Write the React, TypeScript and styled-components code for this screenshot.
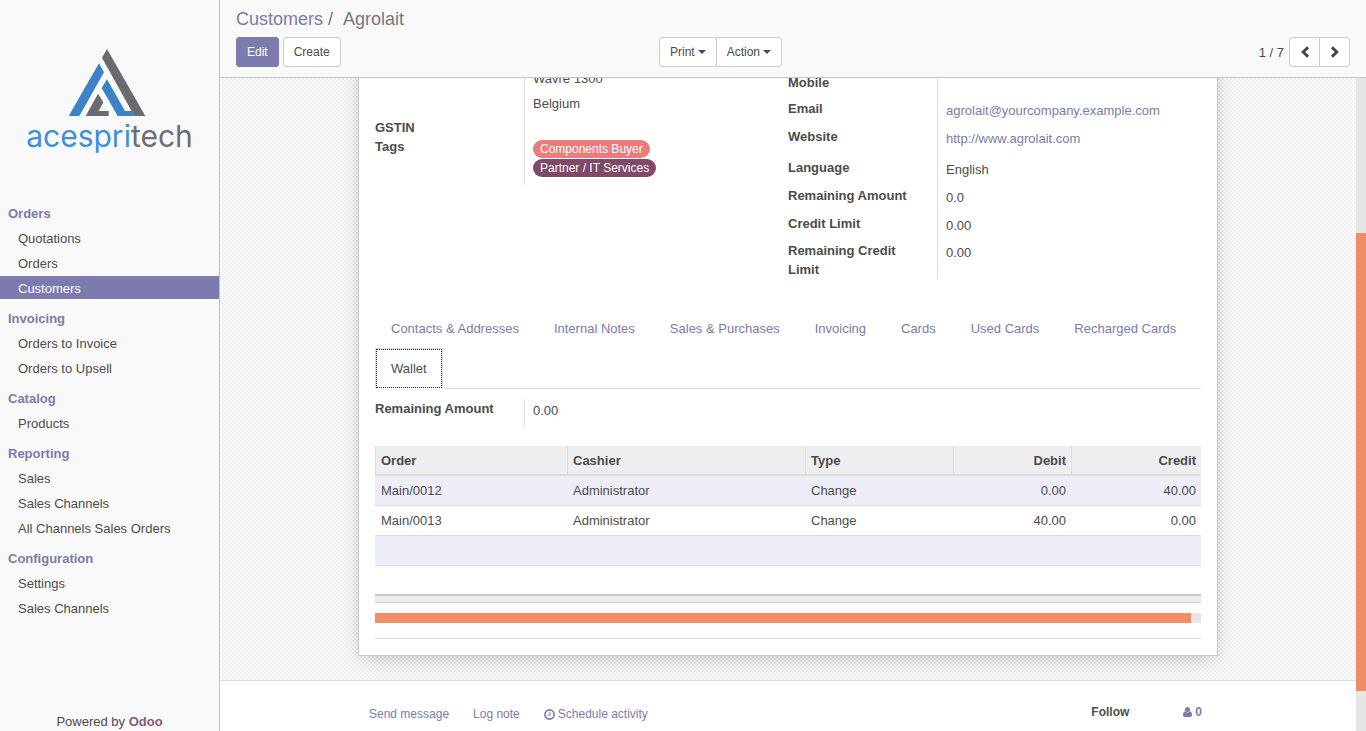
import React from "react";
import styled, { createGlobalStyle } from "styled-components";

const purple = "#7c7bad";
const orange = "#f08d66";

const GlobalStyle = createGlobalStyle`
  *, *::before, *::after { box-sizing: border-box; }
  body {
    margin: 0;
    background: #fff;
    color: #4c4c4c;
    font-family: "Liberation Sans", Arial, sans-serif;
    font-size: 13px;
    line-height: 19px;
  }
  a { color: ${purple}; text-decoration: none; }
  button { font-family: inherit; cursor: pointer; }
`;

const Shell = styled.div`
  display: flex;
  height: 100vh;
  overflow: hidden;
`;

const Sidebar = styled.aside`
  display: flex;
  flex-direction: column;
  flex: 0 0 220px;
  background: #f9f9f9;
  border-right: 1px solid #c0c0c0;
`;

const Brand = styled.a`
  display: flex;
  flex-direction: column;
  align-items: center;
  height: 201px;
  padding-top: 48px;
  svg { display: block; margin-right: 5px; }
`;

const Wordmark = styled.span<{ $grey?: boolean }>`
  color: ${(p) => (p.$grey ? "#6d6e73" : "#3f8fdc")};
`;

const WordmarkLine = styled.span`
  font-family: Inter, "Open Sans", sans-serif;
  font-size: 30px;
  font-weight: 400;
  line-height: 38px;
`;

const Menu = styled.nav`
  flex: 1 1 auto;
  min-height: 0;
  overflow: hidden;
`;

const MenuHeading = styled.h2`
  margin: 0 0 2px;
  padding: 3px 8px 1px;
  font-size: 13px;
  line-height: 19px;
  color: ${purple};
`;

const MenuList = styled.ul`
  list-style: none;
  margin: 0 0 7px;
  padding: 0;
  display: flex;
  flex-direction: column;
  gap: 2px;
`;

const MenuLink = styled.a<{ $active?: boolean }>`
  display: block;
  padding: 3px 18px 1px;
  color: ${(p) => (p.$active ? "#fff" : "#4c4c4c")};
  background: ${(p) => (p.$active ? purple : "transparent")};
`;

const SidebarFooter = styled.footer`
  text-align: center;
  b { color: #875a7b; }
`;

const Main = styled.main`
  display: flex;
  flex-direction: column;
  flex: 1 1 auto;
  min-width: 0;
`;

const ControlPanel = styled.header`
  flex: none;
  padding: 9px 16px 10px;
  background: #f9f9f9;
  border-bottom: 1px solid #c4c4c4;
`;

const Breadcrumb = styled.h1`
  display: flex;
  gap: 5px;
  margin: 0 0 8px;
  font-size: 18px;
  font-weight: 400;
  line-height: 20px;
  color: #777;
`;

const Crumb = styled.span`
  padding-left: 5px;
`;

const Toolbar = styled.div`
  display: grid;
  grid-template-columns: 423px 1fr auto;
  align-items: center;
`;

const ButtonRow = styled.div`
  display: flex;
  gap: 4px;
`;

const ButtonGroup = styled.div`
  display: flex;
  button { border-radius: 0; }
  button + button { margin-left: -1px; }
  button:first-child { border-radius: 3px 0 0 3px; }
  button:last-child { border-radius: 0 3px 3px 0; }
`;

const Button = styled.button<{ $primary?: boolean }>`
  display: inline-flex;
  align-items: center;
  gap: 3px;
  height: 30px;
  padding: 0 10px;
  font-size: 12px;
  line-height: 18px;
  border-radius: 3px;
  border: 1px solid ${(p) => (p.$primary ? purple : "#ccc")};
  background: ${(p) => (p.$primary ? purple : "#fff")};
  color: ${(p) => (p.$primary ? "#fff" : "#4c4c4c")};
`;

const PagerButton = styled(Button)`
  justify-content: center;
  width: 31px;
  padding: 0;
`;

const Pager = styled.div`
  display: flex;
  align-items: center;
  gap: 5px;
`;

const Caret = styled.span`
  border: 4px solid transparent;
  border-top-color: currentColor;
  border-bottom-width: 0;
`;

const Viewport = styled.div`
  display: flex;
  flex: 1 1 auto;
  min-height: 0;
`;

const Scroller = styled.div`
  flex: 1 1 auto;
  min-width: 0;
  overflow: hidden;
`;

const VerticalTrack = styled.div`
  display: flex;
  flex-direction: column;
  flex: 0 0 10px;
  background: #e6e6e6;
  &::before { content: ""; flex: 155; }
  &::after { content: ""; flex: 40; }
`;

const VerticalThumb = styled.div`
  flex: 458;
  background: ${orange};
`;

const FormBackground = styled.div`
  overflow: hidden;
  padding: 0 16px 24px;
  background: repeating-conic-gradient(#eee 0% 25%, #fff 0% 50%) 0 0 / 4px 4px;
`;

const Sheet = styled.section`
  max-width: 860px;
  margin: -29px auto 0;
  padding: 16px;
  background: #fff;
  border: 1px solid #c8c8d3;
  box-shadow: 0 5px 20px -4px rgba(0, 0, 0, 0.26);
`;

const Groups = styled.div`
  display: grid;
  grid-template-columns: 1fr 1fr;
  align-items: start;
  margin-bottom: 29px;
`;

const Group = styled.dl<{ $offset?: boolean }>`
  margin: 0;
  padding-top: ${(p) => (p.$offset ? 7 : 0)}px;
`;

const Field = styled.div<{ $height: number }>`
  display: grid;
  grid-template-columns: 149px 1fr;
  min-height: ${(p) => p.$height}px;
`;

const Label = styled.dt`
  padding-right: 10px;
  font-weight: 700;
`;

const Value = styled.dd<{ $flush?: boolean }>`
  margin: 0;
  padding: ${(p) => (p.$flush ? 0 : 2)}px 0 0 8px;
  border-left: 1px solid #ddd;
`;

const AddressLine = styled.div`
  line-height: 25px;
`;

const TagList = styled.div`
  display: flex;
  flex-direction: column;
  align-items: flex-start;
  gap: 1px;
  padding-top: 1px;
`;

const Tag = styled.span<{ $color: string }>`
  padding: 0 7px;
  border-radius: 9px;
  font-size: 12px;
  line-height: 18px;
  color: #fff;
  background: ${(p) => p.$color};
`;

const Tabs = styled.div`
  display: flex;
  flex-wrap: wrap;
  column-gap: 3px;
  margin-bottom: 10px;
  border-bottom: 1px solid #ddd;
`;

const Tab = styled.button<{ $active?: boolean }>`
  margin: 0 0 -1px;
  padding: 10px 15px;
  font-size: 13px;
  line-height: 19px;
  color: ${(p) => (p.$active ? "#4c4c4c" : purple)};
  background: ${(p) => (p.$active ? "#fff" : "transparent")};
  border: 1px solid ${(p) => (p.$active ? "#ddd" : "transparent")};
  border-bottom-color: ${(p) => (p.$active ? "#fff" : "transparent")};
  outline: ${(p) => (p.$active ? "1px dotted #222" : "none")};
  outline-offset: -2px;
`;

const Table = styled.table`
  width: 100%;
  margin-top: 20px;
  table-layout: fixed;
  border-collapse: separate;
  border-spacing: 0;
`;

const HeadCell = styled.th<{ $width?: number; $right?: boolean }>`
  width: ${(p) => (p.$width ? `${p.$width}px` : "auto")};
  height: 30px;
  padding: 0 5px;
  text-align: ${(p) => (p.$right ? "right" : "left")};
  background: #eee;
  border-left: 1px solid #ddd;
  border-bottom: 2px solid #ddd;
`;

const Row = styled.tr`
  &:nth-child(odd) td { background-color: #eeeef8; }
`;

const Cell = styled.td<{ $right?: boolean }>`
  height: 30px;
  padding: 0 5px 0 6px;
  text-align: ${(p) => (p.$right ? "right" : "left")};
  border-bottom: 1px solid #ddd;
`;

const TotalsBar = styled.div`
  height: 9px;
  margin: 28px 0 10px;
  background: #eee;
  border-top: 2px solid #c8c8c8;
  border-bottom: 1px solid #c8c8c8;
`;

const HorizontalTrack = styled.div`
  height: 10px;
  padding-right: 10px;
  background: #e6e6e6;
`;

const HorizontalThumb = styled.div`
  height: 10px;
  background: ${orange};
`;

const Rule = styled.hr`
  margin: 15px 0 0;
  border: 0;
  border-top: 1px solid #ddd;
`;

const Chatter = styled.section`
  min-height: 100px;
  padding: 22px 16px;
  background: #fff;
  border-top: 1px solid #ddd;
`;

const ChatterBar = styled.div`
  display: flex;
  justify-content: space-between;
  align-items: flex-start;
  max-width: 860px;
  margin: 0 auto;
  padding: 0 16px 0 11px;
  font-size: 12px;
  line-height: 18px;
`;

const ChatterActions = styled.div`
  display: flex;
  gap: 24px;
  padding-top: 2px;
`;

const FollowBox = styled.div`
  display: flex;
  gap: 54px;
`;

const ChatterButton = styled.button<{ $strong?: boolean; $dark?: boolean }>`
  display: inline-flex;
  align-items: center;
  gap: 3px;
  padding: 0;
  border: 0;
  background: none;
  font-size: 12px;
  line-height: 18px;
  font-weight: ${(p) => (p.$strong ? 700 : 400)};
  color: ${(p) => (p.$dark ? "#4c4c4c" : purple)};
`;

const LogoMark = () => (
  <svg width="78" height="69" viewBox="205 54 234 207" aria-hidden="true">
    <path fill="#6a6b70" d="M322 57 437 258H404L307 83Z" />
    <path fill="#3c82c8" d="M322 148 376 243H397L406 258H354L306 174Z" />
    <path fill="#6a6b70" d="M295 191 311 217 297 243H327V258H258Z" />
    <path fill="#3c82c8" d="M298 100 313 127 239 258H207Z" />
  </svg>
);

const Chevron = ({ flip }: { flip?: boolean }) => (
  <svg width="12" height="14" viewBox="0 0 12 14" aria-hidden="true">
    <path
      d={flip ? "M3 2.200 7.800 7 3 11.800" : "M9 2.200 4.200 7 9 11.800"}
      fill="none"
      stroke="#444"
      strokeWidth="2.900"
    />
  </svg>
);

const ClockIcon = () => (
  <svg width="11" height="11" viewBox="0 0 10 10" fill="none" stroke="currentColor" aria-hidden="true">
    <circle cx="5" cy="5" r="4.200" strokeWidth="1.500" />
    <path d="M5.400 2.500V5.500H3.200" strokeWidth="0.900" />
  </svg>
);

const UserIcon = () => (
  <svg width="9" height="10" viewBox="0 0 9 10" fill="currentColor" aria-hidden="true">
    <circle cx="4.500" cy="2.500" r="2.500" />
    <path d="M2 4.300Q4.500 6.700 7 4.300 9 4.800 9 8.300 9 10 7.300 10H1.700Q0 10 0 8.300 0 4.800 2 4.300Z" />
  </svg>
);

const menu = [
  { title: "Orders", items: ["Quotations", "Orders", "Customers"] },
  { title: "Invoicing", items: ["Orders to Invoice", "Orders to Upsell"] },
  { title: "Catalog", items: ["Products"] },
  { title: "Reporting", items: ["Sales", "Sales Channels", "All Channels Sales Orders"] },
  { title: "Configuration", items: ["Settings", "Sales Channels"] },
];

const details: { label: string; value: React.ReactNode; height: number }[] = [
  { label: "Mobile", value: "", height: 26 },
  { label: "Email", value: <a href="mailto:agrolait@yourcompany.example.com">agrolait@yourcompany.example.com</a>, height: 28 },
  { label: "Website", value: <a href="http://www.agrolait.com">http://www.agrolait.com</a>, height: 31 },
  { label: "Language", value: "English", height: 28 },
  { label: "Remaining Amount", value: "0.0", height: 28 },
  { label: "Credit Limit", value: "0.00", height: 27 },
  { label: "Remaining Credit Limit", value: "0.00", height: 38 },
];

const tabs = [
  "Contacts & Addresses",
  "Internal Notes",
  "Sales & Purchases",
  "Invoicing",
  "Cards",
  "Used Cards",
  "Recharged Cards",
  "Wallet",
];

const columns = [
  { title: "Order", width: 192 },
  { title: "Cashier", width: 238 },
  { title: "Type", width: 148 },
  { title: "Debit", width: 118, right: true },
  { title: "Credit", right: true },
];

const rows = [
  ["Main/0012", "Administrator", "Change", "0.00", "40.00"],
  ["Main/0013", "Administrator", "Change", "40.00", "0.00"],
  ["", "", "", "", ""],
];

export default function App() {
  return (
    <Shell>
      <GlobalStyle />
      <Sidebar>
        <Brand href="#">
          <LogoMark />
          <WordmarkLine>
            <Wordmark>acespri</Wordmark>
            <Wordmark $grey>tech</Wordmark>
          </WordmarkLine>
        </Brand>
        <Menu>
          {menu.map((section) => (
            <React.Fragment key={section.title}>
              <MenuHeading>{section.title}</MenuHeading>
              <MenuList>
                {section.items.map((item) => (
                  <li key={item}>
                    <MenuLink href="#" $active={item === "Customers"}>{item}</MenuLink>
                  </li>
                ))}
              </MenuList>
            </React.Fragment>
          ))}
        </Menu>
        <SidebarFooter>
          Powered by <a href="#"><b>Odoo</b></a>
        </SidebarFooter>
      </Sidebar>

      <Main>
        <ControlPanel>
          <Breadcrumb>
            <a href="#">Customers</a>/<Crumb>Agrolait</Crumb>
          </Breadcrumb>
          <Toolbar>
            <ButtonRow>
              <Button $primary>Edit</Button>
              <Button>Create</Button>
            </ButtonRow>
            <ButtonGroup>
              <Button>Print<Caret /></Button>
              <Button>Action<Caret /></Button>
            </ButtonGroup>
            <Pager>
              <span>1 / 7</span>
              <ButtonGroup>
                <PagerButton aria-label="Previous"><Chevron /></PagerButton>
                <PagerButton aria-label="Next"><Chevron flip /></PagerButton>
              </ButtonGroup>
            </Pager>
          </Toolbar>
        </ControlPanel>

        <Viewport>
          <Scroller>
            <FormBackground>
              <Sheet>
                <Groups>
                  <Group>
                    <Field $height={52}>
                      <Label />
                      <Value $flush>
                        <AddressLine>Wavre 1300</AddressLine>
                        <AddressLine>Belgium</AddressLine>
                      </Value>
                    </Field>
                    <Field $height={19}>
                      <Label>GSTIN</Label>
                      <Value />
                    </Field>
                    <Field $height={48}>
                      <Label>Tags</Label>
                      <Value>
                        <TagList>
                          <Tag $color="#ee7b7b">Components Buyer</Tag>
                          <Tag $color="#804967">Partner / IT Services</Tag>
                        </TagList>
                      </Value>
                    </Field>
                  </Group>
                  <Group $offset>
                    {details.map((d) => (
                      <Field key={d.label} $height={d.height}>
                        <Label>{d.label}</Label>
                        <Value>{d.value}</Value>
                      </Field>
                    ))}
                  </Group>
                </Groups>

                <Tabs role="tablist">
                  {tabs.map((t) => (
                    <Tab key={t} role="tab" aria-selected={t === "Wallet"} $active={t === "Wallet"}>{t}</Tab>
                  ))}
                </Tabs>

                <Group>
                  <Field $height={27}>
                    <Label>Remaining Amount</Label>
                    <Value>0.00</Value>
                  </Field>
                </Group>

                <Table>
                  <thead>
                    <tr>
                      {columns.map((c) => (
                        <HeadCell key={c.title} $width={c.width} $right={c.right}>{c.title}</HeadCell>
                      ))}
                    </tr>
                  </thead>
                  <tbody>
                    {rows.map((row, i) => (
                      <Row key={i}>
                        {row.map((cell, j) => (
                          <Cell key={j} $right={j > 2}>{cell}</Cell>
                        ))}
                      </Row>
                    ))}
                  </tbody>
                </Table>
                <TotalsBar />
                <HorizontalTrack><HorizontalThumb /></HorizontalTrack>
                <Rule />
              </Sheet>
            </FormBackground>
            <Chatter>
              <ChatterBar>
                <ChatterActions>
                  <ChatterButton>Send message</ChatterButton>
                  <ChatterButton>Log note</ChatterButton>
                  <ChatterButton><ClockIcon />Schedule activity</ChatterButton>
                </ChatterActions>
                <FollowBox>
                  <ChatterButton $strong $dark>Follow</ChatterButton>
                  <ChatterButton $strong><UserIcon />0</ChatterButton>
                </FollowBox>
              </ChatterBar>
            </Chatter>
          </Scroller>
          <VerticalTrack><VerticalThumb /></VerticalTrack>
        </Viewport>
      </Main>
    </Shell>
  );
}
